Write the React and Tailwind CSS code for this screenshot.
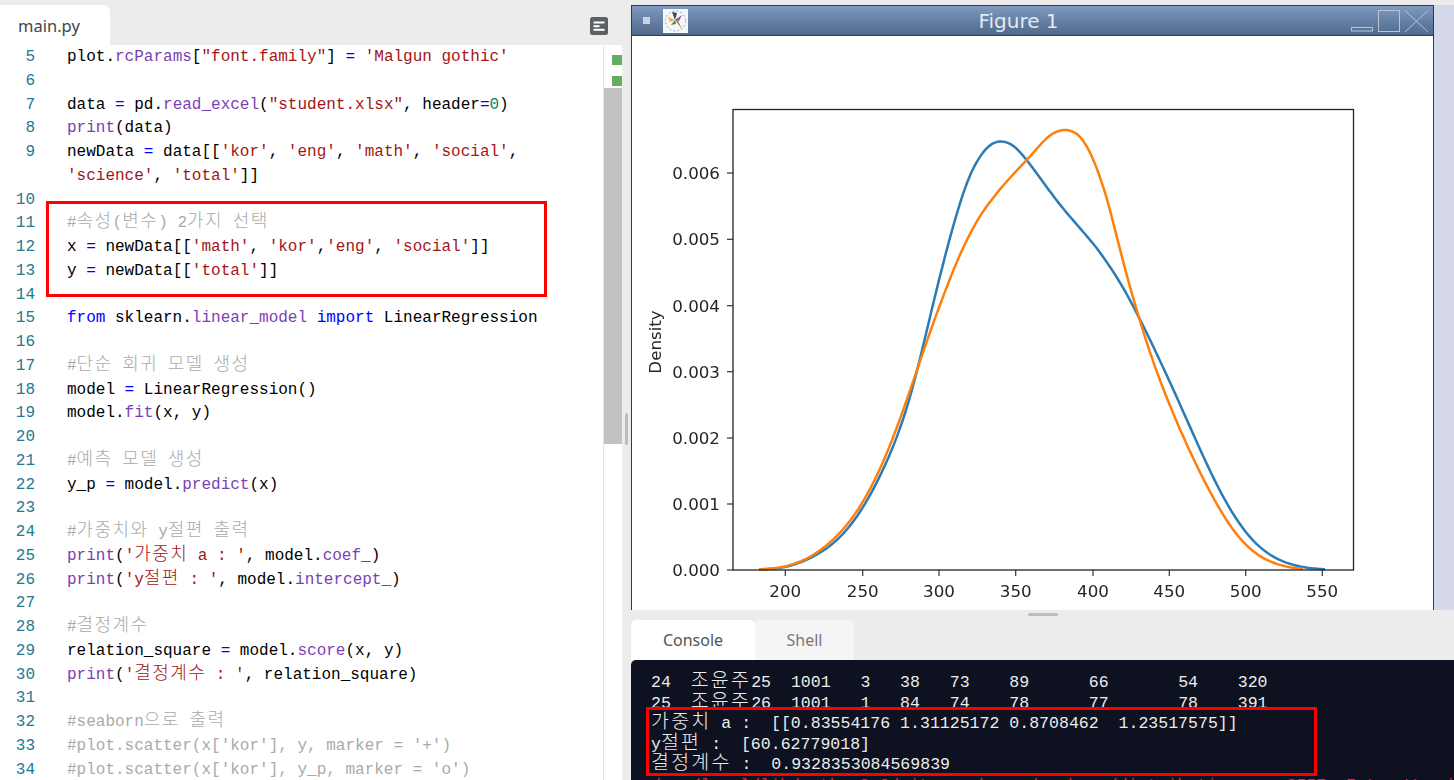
import React from "react";

const P = ({ children }) => <span className="text-[#7b3fb5]">{children}</span>;
const S = ({ children }) => <span className="text-[#a31515]">{children}</span>;
const O = ({ children }) => <span className="text-[#0000ff]">{children}</span>;
const C = ({ children }) => <span className="text-[#aaaaaa]">{children}</span>;
const N = ({ children }) => <span className="text-[#098658]">{children}</span>;
const K = ({ children }) => (
  <span className="font-['Noto_Sans_CJK_KR'] text-[18px] leading-[0] tracking-[1.44px] font-light">{children}</span>
);
const H = ({ children }) => (
  <span className="font-['Noto_Sans_CJK_KR'] text-[19.5px] leading-[0] tracking-[2.2px] font-light">{children}</span>
);

const lines = [
  [5, <>plot.<P>rcParams</P>[<S>"font.family"</S>] <O>=</O> <S>'Malgun gothic'</S></>],
  [6, ""],
  [7, <>data <O>=</O> pd.<P>read_excel</P>(<S>"student.xlsx"</S>, header<O>=</O><N>0</N>)</>],
  [8, <><P>print</P>(data)</>],
  [9, <>newData <O>=</O> data[[<S>'kor'</S>, <S>'eng'</S>, <S>'math'</S>, <S>'social'</S>, <S>'science'</S>, <S>'total'</S>]]</>],
  [10, ""],
  [11, <C>#<K>속성</K>(<K>변수</K>) 2<K>가지</K> <K>선택</K></C>],
  [12, <>x <O>=</O> newData[[<S>'math'</S>, <S>'kor'</S>,<S>'eng'</S>, <S>'social'</S>]]</>],
  [13, <>y <O>=</O> newData[[<S>'total'</S>]]</>],
  [14, ""],
  [15, <><O>from</O> sklearn.<P>linear_model</P> <O>import</O> LinearRegression</>],
  [16, ""],
  [17, <C>#<K>단순</K> <K>회귀</K> <K>모델</K> <K>생성</K></C>],
  [18, <>model <O>=</O> LinearRegression()</>],
  [19, <>model.<P>fit</P>(x, y)</>],
  [20, ""],
  [21, <C>#<K>예측</K> <K>모델</K> <K>생성</K></C>],
  [22, <>y_p <O>=</O> model.<P>predict</P>(x)</>],
  [23, ""],
  [24, <C>#<K>가중치와</K> y<K>절편</K> <K>출력</K></C>],
  [25, <><P>print</P>(<S>'<K>가중치</K> a : '</S>, model.<P>coef_</P>)</>],
  [26, <><P>print</P>(<S>'y<K>절편</K> : '</S>, model.<P>intercept_</P>)</>],
  [27, ""],
  [28, <C>#<K>결정계수</K></C>],
  [29, <>relation_square <O>=</O> model.<P>score</P>(x, y)</>],
  [30, <><P>print</P>(<S>'<K>결정계수</K> : '</S>, relation_square)</>],
  [31, ""],
  [32, <C>#seaborn<K>으로</K> <K>출력</K></C>],
  [33, <C>#plot.scatter(x['kor'], y, marker = '+')</C>],
  [34, <C>#plot.scatter(x['kor'], y_p, marker = 'o')</C>],
];

const blue = [[759,569.6],[785,568.6],[813,558],[840,540],[863,510],[880,478],[897,440],[910,405],[920,363],[933,300],[947,247],[960,200],[973,167],[987,146],[999,140],[1013,144],[1027,160],[1040,178],[1060,205],[1097,248],[1117,277],[1135,308],[1155,350],[1177,397],[1200,450],[1220,493],[1240,527],[1260,550],[1283,563],[1307,568.5],[1325,569.6]];
const orange = [[759,569.6],[785,568],[813,557],[840,535],[863,505],[883,465],[903,413],[920,360],[940,303],[960,253],[980,215],[1000,189],[1017,170],[1027,160],[1040,145],[1050,134],[1065,128.5],[1080,134],[1093,157],[1107,197],[1120,250],[1135,307],[1148,350],[1167,400],[1190,453],[1210,493],[1233,533],[1257,557],[1283,567],[1303,569.5]];

// Resample the hand-read points at 2px steps and smooth them with a gaussian,
// narrow around the peaks and wide along the flanks and tails.
function sigmaAt(x) {
  if (x >= 970 && x <= 1110) return 5;
  const d = x < 970 ? 970 - x : x - 1110;
  return Math.min(12, 5 + d * 0.25);
}
function smooth(p) {
  const xs = [], ys = [];
  let j = 0;
  for (let x = p[0][0]; x <= p[p.length - 1][0]; x += 2) {
    while (j < p.length - 2 && p[j + 1][0] < x) j++;
    const t = (x - p[j][0]) / (p[j + 1][0] - p[j][0]);
    xs.push(x);
    ys.push(p[j][1] + t * (p[j + 1][1] - p[j][1]));
  }
  const out = ys.map((_, i) => {
    const sigma = sigmaAt(xs[i]);
    const r = Math.ceil((sigma * 3) / 2);
    let s = 0, w = 0;
    for (let k = -r; k <= r; k++) {
      const y = ys[Math.min(ys.length - 1, Math.max(0, i + k))];
      const g = Math.exp(-((k * 2) ** 2) / (2 * sigma * sigma));
      s += y * g;
      w += g;
    }
    return s / w;
  });
  return "M" + xs.map((x, i) => `${x} ${Math.min(out[i], 569.6).toFixed(2)}`).join(" L");
}

const yTicks = [["0.006",173],["0.005",239.3],["0.004",305.7],["0.003",371.7],["0.002",438],["0.001",504],["0.000",570]];
const xTicks = [["200",785.3],["250",862.7],["300",939],["350",1015.7],["400",1093],["450",1169.3],["500",1245.7],["550",1322.3]];

function Chart() {
  return (
    <svg viewBox="632 36 801 574" className="block w-full h-full blur-[0.35px]">
      <g className="font-['DejaVu_Sans'] text-[16.7px]" fill="#262626">
        {yTicks.map(([t, y]) => (
          <g key={t}>
            <line x1="727" x2="733" y1={y} y2={y} stroke="#333" strokeWidth="1.2" />
            <text x="720" y={y + 6} textAnchor="end">{t}</text>
          </g>
        ))}
        {xTicks.map(([t, x]) => (
          <g key={t}>
            <line x1={x} x2={x} y1="570" y2="576" stroke="#333" strokeWidth="1.2" />
            <text x={x} y="596.5" textAnchor="middle">{t}</text>
          </g>
        ))}
        <text transform="translate(661 342) rotate(-90)" textAnchor="middle">Density</text>
      </g>
      <path d={smooth(blue)} fill="none" stroke="#2b7cb6" strokeWidth="2.5" />
      <path d={smooth(orange)} fill="none" stroke="#ff7f0e" strokeWidth="2.5" />
      <rect x="733" y="109.5" width="620.5" height="460.5" fill="none" stroke="#222" strokeWidth="1.3" />
    </svg>
  );
}

function FigIcon() {
  return (
    <svg viewBox="0 0 25 24" className="w-[25px] h-[24px] block">
      <rect width="25" height="24" fill="#f4f6f8" />
      <circle cx="12.5" cy="12" r="10" fill="none" stroke="#6f8fb0" strokeWidth="1" strokeDasharray="1.5 2.5" />
      <path d="M12 11 L5 8 L7 13 Z" fill="#f2b632" />
      <path d="M12 11 L8 16 L13 15 Z" fill="#3c8d4f" />
      <path d="M12 11 L19 20 L15 12 Z" fill="#d2622a" />
      <path d="M12 11 L9 3 L14 4 Z" fill="#37485e" />
      <path d="M12 11 L19 6 L16 12 Z" fill="#8a5a8c" />
    </svg>
  );
}

export default function App() {
  return (
    <div className="w-[1454px] h-[780px] overflow-hidden flex bg-[#ececec]">
      <div className="relative w-[622px] h-full flex flex-col shrink-0">
        <div className="h-[45px] shrink-0 flex items-end justify-between">
          <div className="w-[110px] h-[40px] bg-white rounded-tr-[6px] pl-[18px] font-['Noto_Sans'] text-[16.5px] leading-[42px] text-[#444]">main.py</div>
          <svg viewBox="0 0 18 18" className="w-[18px] h-[18px] mr-[14px] mb-[10px]">
            <rect width="18" height="18" rx="2.5" fill="#5c5f63" />
            <rect x="3.5" y="4.5" width="11" height="2" fill="#fff" />
            <rect x="3.5" y="8.2" width="6" height="2" fill="#fff" />
            <rect x="3.5" y="11.8" width="11" height="2" fill="#fff" />
          </svg>
        </div>
        <div className="flex-1 min-h-0 flex">
          <div className="w-[603px] bg-white overflow-hidden font-['Liberation_Mono'] text-[16px] leading-[23.75px] text-black">
            <div className="mt-[1px]">
              {lines.map(([n, c]) => (
                <div key={n} className="flex">
                  <div className="w-[35px] shrink-0 text-right text-[#237893]">{n}</div>
                  <div className="ml-[32px] w-[536px] min-h-[23.75px] whitespace-pre-wrap">{c}</div>
                </div>
              ))}
            </div>
          </div>
          <div className="w-[19px] shrink-0 bg-white border-l border-[#e4e4e4] flex flex-col">
            <div className="h-[43px] shrink-0 pl-[8px] flex flex-col">
              <div className="mt-[10px] h-[10px] w-[10px] bg-[#62ad62]" />
              <div className="mt-[11px] h-[10px] w-[10px] bg-[#62ad62]" />
            </div>
            <div className="h-[356px] shrink-0 bg-[#c1c1c1]" />
          </div>
        </div>
        <div className="absolute left-[46px] top-[201px] w-[501px] h-[96px] border-[3px] border-[#ff0000]" />
      </div>

      <div className="w-[9px] shrink-0 flex items-start justify-center">
        <div className="mt-[413px] w-[3px] h-[32px] bg-[#bdbdbd] rounded-sm" />
      </div>

      <div className="flex-1 flex flex-col min-w-0">
        <div className="h-[5px] shrink-0" />
        <div className="h-[605px] shrink-0 flex bg-[#d5d8e8]">
          <div className="w-[803px] shrink-0 flex flex-col border-x border-[#2e3b4c]">
            <div className="h-[31px] shrink-0 flex items-center relative bg-gradient-to-b from-[#7f99c0] to-[#4f6a8b] border-y border-[#2e3b4c]">
              <div className="ml-[11px] w-[7px] h-[7px] bg-[#c8d2e2]" />
              <div className="ml-[13px]"><FigIcon /></div>
              <div className="flex-1 text-center pr-[84px] font-['DejaVu_Sans'] text-[20px] text-[#e4e9f2]">Figure 1</div>
              <svg viewBox="0 0 80 24" className="absolute right-[2px] top-[3px] w-[80px] h-[24px]" fill="none" stroke="#b7c4d7" strokeWidth="1">
                <rect x="0.5" y="18.5" width="21" height="3.5" />
                <rect x="27.5" y="1.5" width="21" height="21" />
                <path d="M54 1.5 L77 23 M77 1.5 L54 23" />
              </svg>
            </div>
            <div className="flex-1 min-h-0 bg-white">
              <Chart />
            </div>
          </div>
        </div>
        <div className="flex-1 min-h-0 flex flex-col relative">
          <div className="h-[10px] shrink-0 flex justify-center items-start">
            <div className="mt-[3px] w-[30px] h-[3px] rounded-sm bg-[#bdbdbd]" />
          </div>
          <div className="h-[40px] shrink-0 flex font-['Noto_Sans'] text-[16px] leading-[40px] text-center">
            <div className="w-[124px] bg-white text-[#555] rounded-t-[5px]">Console</div>
            <div className="w-[99px] bg-[#f5f5f5] text-[#777] rounded-t-[5px]">Shell</div>
          </div>
          <div className="flex-1 min-h-0 overflow-hidden bg-[#0d1120] rounded-tl-[5px] pl-[20px] pt-[13px] font-['Liberation_Mono'] text-[16.56px] leading-[20.5px] text-[#ececec] whitespace-pre">
            <div>24  <H>조윤주</H>25  1001   3   38   73    89      66       54    320</div>
            <div>25  <H>조윤주</H>26  1001   1   84   74    78      77       78    391</div>
            <div><H>가중치</H> a :  [[0.83554176 1.31125172 0.8708462  1.23517575]]</div>
            <div>y<H>절편</H> :  [60.62779018]</div>
            <div><H>결정계수</H> :  0.9328353084569839</div>
            <div className="text-[#e0245e]">/usr/local/lib/python3.9/site-packages/seaborn/distributions.py:2557: FutureWarning</div>
          </div>
          <div className="absolute left-[15px] top-[97px] w-[671px] h-[69px] border-[3px] border-[#ff0000]" />
        </div>
      </div>
    </div>
  );
}
